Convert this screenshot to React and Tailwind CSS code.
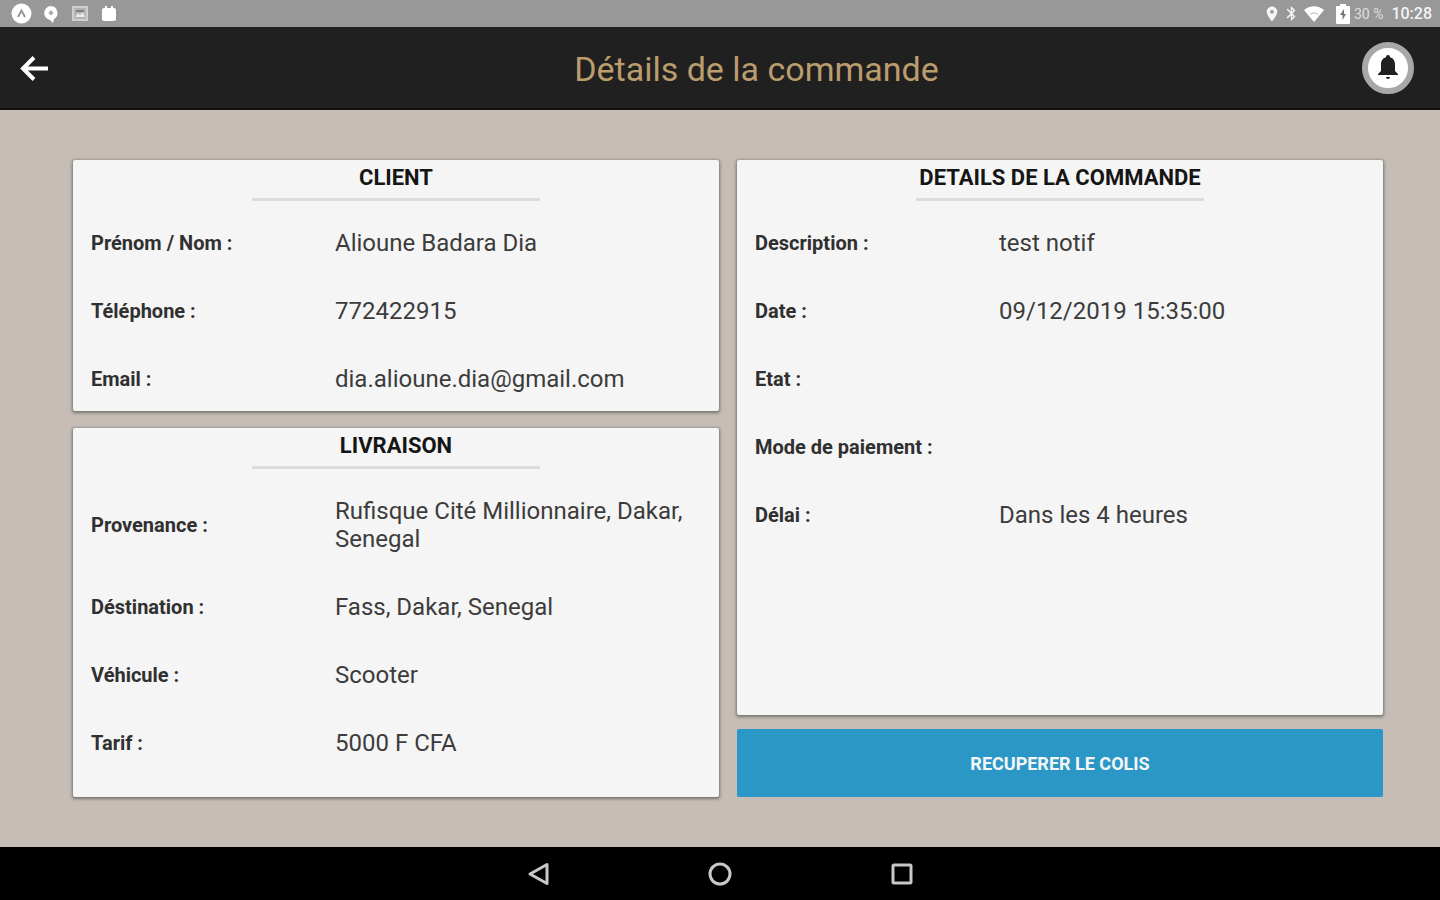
import { MdLocationOn, MdBluetooth } from 'react-icons/md'

const CLIENT = [
  { label: 'Prénom / Nom :', value: 'Alioune Badara Dia' },
  { label: 'Téléphone :', value: '772422915' },
  { label: 'Email :', value: 'dia.alioune.dia@gmail.com' },
]

const LIVRAISON = [
  { label: 'Provenance :', value: 'Rufisque Cité Millionnaire, Dakar, Senegal' },
  { label: 'Déstination :', value: 'Fass, Dakar, Senegal' },
  { label: 'Véhicule :', value: 'Scooter' },
  { label: 'Tarif :', value: '5000 F CFA' },
]

const COMMANDE = [
  { label: 'Description :', value: 'test notif' },
  { label: 'Date :', value: '09/12/2019 15:35:00' },
  { label: 'Etat :', value: '' },
  { label: 'Mode de paiement :', value: '' },
  { label: 'Délai :', value: 'Dans les 4 heures' },
]

function StatusBar() {
  return (
    <div className="h-[27px] bg-[#989898] flex items-center justify-between pl-[11px] pr-2 text-[#f4f4f4]">
      <div className="flex items-center gap-[11px]">
        <svg width="21" height="21" viewBox="0 0 21 21">
          <circle cx="10.5" cy="10.5" r="10" fill="#fff" />
          <path d="M7 14 L10.5 7.500 L14 14" fill="none" stroke="#989898" strokeWidth="2" />
        </svg>
        <svg width="16" height="18" viewBox="0 0 16 18">
          <path d="M8 1a7 7 0 0 0-1 13.9L10 18l1-4A7 7 0 0 0 8 1z" fill="#fff" />
          <path d="M8 5l2.5 3L8 10.500 5.500 8z" fill="#a8a8a8" />
        </svg>
        <svg className="ml-0.5" width="16" height="15" viewBox="0 0 16 15">
          <rect x="1" y="1" width="14" height="13" fill="#b4b4b4" stroke="#cfcfcf" strokeWidth="2" />
          <path d="M3 11l3-4 2 2 3-3 2 5z" fill="#e8e8e8" />
          <path d="M4 4h8v2H4z" fill="#808080" />
        </svg>
        <svg className="ml-0.5" width="16" height="16" viewBox="0 0 16 16">
          <path d="M4 0h2v2h4V0h2v2h1a2 2 0 0 1 2 2v9a2 2 0 0 1-2 2H3a2 2 0 0 1-2-2V4a2 2 0 0 1 2-2h1z" fill="#fff" />
        </svg>
      </div>
      <div className="flex items-center">
        <MdLocationOn size={18} className="mr-0.5" />
        <MdBluetooth size={17} className="mr-1" />
        <svg className="mr-3" width="20" height="16" viewBox="0 0 20 16">
          <path d="M0 4a15 15 0 0 1 20 0L10 16z" fill="#fff" />
          <path d="M6 8.500a6 6 0 0 1 8 0" fill="none" stroke="#bbb" strokeWidth="1" />
        </svg>
        <svg className="mr-1" width="14" height="20" viewBox="0 0 14 20">
          <path d="M4 0h6v2h3a1 1 0 0 1 1 1v16a1 1 0 0 1-1 1H1a1 1 0 0 1-1-1V3a1 1 0 0 1 1-1h3z" fill="#fff" />
          <path d="M8 5l-4 6h2.500v5L10 10H8z" fill="#777" />
        </svg>
        <span className="text-[14px] leading-5 text-[#dedede] mr-2">30 %</span>
        <span className="text-[16px] leading-5 font-medium">10:28</span>
      </div>
    </div>
  )
}

function Card({ title, rows, className }) {
  return (
    <section className={`bg-[#f5f5f5] rounded-[2px] px-[18px] pb-[18px] shadow-[0_1px_3px_1px_rgba(70,70,60,0.6)] ${className}`}>
      <div className="h-[69px] flex flex-col items-center pt-1">
        <h2 className="text-[22px] leading-7 font-bold text-[#151515]">{title}</h2>
        <div className="w-[288px] max-w-full h-[3px] mt-1.5 bg-[#dcdcdc]"></div>
      </div>
      <dl className="flex flex-col gap-10">
        {rows.map((row) => (
          <div key={row.label} className="flex items-center min-h-7">
            <dt className="w-2/5 shrink-0 text-[20px] leading-7 font-bold text-[#303030]">{row.label}</dt>
            <dd className="flex-1 text-2xl leading-7 text-[#3c3c3c]">{row.value}</dd>
          </div>
        ))}
      </dl>
    </section>
  )
}

export default function App() {
  return (
    <div className="min-h-screen flex flex-col bg-[#c5bdb6] font-[Roboto,sans-serif]">
      <StatusBar />

      <header className="h-[83px] bg-[#202020] border-b-2 border-[#101010] flex items-center pl-[17px] pr-[26px]">
        <button type="button" aria-label="Retour" className="text-white">
          <svg width="34" height="34" viewBox="0 0 34 34">
            <path d="M31 17.500H6M17 6.500l-11 11 11 11" fill="none" stroke="currentColor" strokeWidth="4" />
          </svg>
        </button>
        <h1 className="flex-1 text-center text-[34px] leading-10 text-[#bb9c6c] pl-[100px] pt-0.5">Détails de la commande</h1>
        <button type="button" aria-label="Notifications" className="w-[52px] h-[52px] rounded-full bg-white border-[6px] border-[#a8a8a8] flex items-center justify-center">
          <svg width="22" height="28" viewBox="0 0 22 28">
            <path d="M11 1a2 2 0 0 0-2 2.200C5.500 4 4 7 4 10.500V17l-3 3v1h20v-1l-3-3v-6.500C18 7 16.500 4 13 3.200A2 2 0 0 0 11 1z" fill="#202020" />
            <path d="M9 23h4a2 2 0 0 1-4 0z" fill="#202020" />
          </svg>
        </button>
      </header>

      <main className="flex-1 grid grid-cols-2 gap-[18px] pl-[73px] pr-[57px] py-[50px]">
        <div className="flex flex-col gap-[17px]">
          <Card title="CLIENT" rows={CLIENT} className="" />
          <Card title="LIVRAISON" rows={LIVRAISON} className="flex-1" />
        </div>
        <div className="flex flex-col gap-[14px]">
          <Card title="DETAILS DE LA COMMANDE" rows={COMMANDE} className="flex-1" />
          <button type="button" className="h-[68px] rounded-[2px] bg-[#2a97c7] text-[#f5f5f5] text-lg leading-6 font-bold pt-0.5">
            RECUPERER LE COLIS
          </button>
        </div>
      </main>

      {/* Android navigation keys */}
      <nav className="h-[53px] bg-black flex items-center justify-center gap-[158px]">
        <button type="button" aria-label="Précédent">
          <svg width="24" height="24" viewBox="0 0 24 24">
            <path d="M21 2.500v19L4 12z" fill="none" stroke="#c8c8c8" strokeWidth="3" strokeLinejoin="round" />
          </svg>
        </button>
        <button type="button" aria-label="Accueil">
          <svg width="24" height="24" viewBox="0 0 24 24">
            <circle cx="12" cy="12" r="10" fill="none" stroke="#c8c8c8" strokeWidth="3" />
          </svg>
        </button>
        <button type="button" aria-label="Applications récentes">
          <svg width="24" height="24" viewBox="0 0 24 24">
            <rect x="3" y="3" width="18" height="18" rx="1" fill="none" stroke="#c8c8c8" strokeWidth="3" />
          </svg>
        </button>
      </nav>
    </div>
  )
}
